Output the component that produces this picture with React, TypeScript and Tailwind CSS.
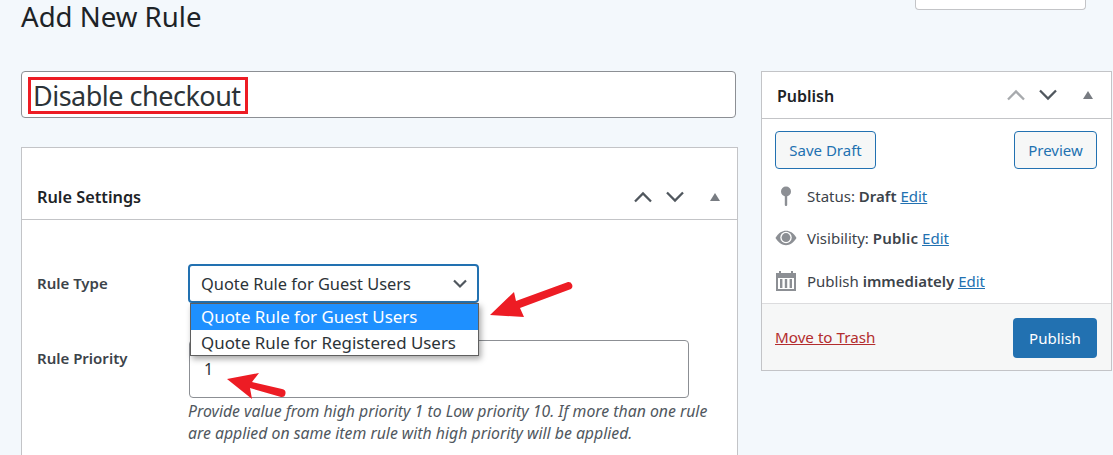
const font = "font-['Noto_Sans',sans-serif]";

const Chevrons = ({ upClass }: { upClass: string }) => (
  <div className="flex items-center">
    <svg width="20" height="12" viewBox="0 0 20 12" className={upClass} fill="none" stroke="currentColor" strokeWidth="2.3">
      <path d="M2 10.5 L10 2.5 L18 10.5" />
    </svg>
    <svg width="20" height="12" viewBox="0 0 20 12" className="ml-[12px] text-[#50575e]" fill="none" stroke="currentColor" strokeWidth="2.3">
      <path d="M2 1.5 L10 9.5 L18 1.5" />
    </svg>
    <svg width="12" height="8" viewBox="0 0 12 8" className="ml-[24px] text-[#787c82]" fill="currentColor">
      <path d="M6 0 L11 8 L1 8 Z" />
    </svg>
  </div>
);

const Edit = () => <a className="text-[#2271b1] underline">Edit</a>;

const MetaRow = ({ icon, children, className }: { icon: React.ReactNode; children: React.ReactNode; className: string }) => (
  <div className={`flex items-center text-[15px] leading-[20px] text-[#3c434a] ${className}`}>
    <span className="flex w-[32px] shrink-0 justify-center pr-[10px]">{icon}</span>
    <span className="whitespace-nowrap">{children}</span>
  </div>
);

export default function App() {
  return (
    <div className={`relative h-[455px] w-[1113px] overflow-hidden bg-[#f3f8fc] ${font}`}>
      <div className="flex items-start justify-between pl-[21px] pr-[27px]">
        <h1 className="text-[27.6px] leading-[33px] text-[#1d2327]">Add New Rule</h1>
        <div className="h-[10px] w-[171px] rounded-b-[4px] border border-t-0 border-[#c3c4c7] bg-white" />
      </div>

      <div className="mt-[38px] flex items-start pl-[21px]">
        {/* left column */}
        <div className="w-[717px]">
          <div className="flex h-[47px] w-[715px] items-center rounded-[4px] border border-[#8c8f94] bg-white pl-[11px] pt-[3px] text-[27px] tracking-[-0.5px] text-[#2c3338]">
            Disable checkout
          </div>

          <div className="mt-[29px] h-[400px] border border-[#c3c4c7] bg-white">
            <div className="flex h-[72px] items-end justify-between border-b border-[#c3c4c7] pb-[10px] pl-[15px] pr-[16px]">
              <h2 className="text-[16.3px] font-semibold leading-[24px] text-[#1d2327]">Rule Settings</h2>
              <div className="pb-[6px]">
                <Chevrons upClass="text-[#50575e]" />
              </div>
            </div>

            <div className="flex pl-[15px] pt-[44px]">
              <div className="w-[151px] shrink-0 text-[15px] font-semibold text-[#3c434a]">
                <div className="pt-[8px] leading-[22px]">Rule Type</div>
                <div className="pt-[53px] leading-[22px]">Rule Priority</div>
              </div>
              <div>
                <div className="flex h-[39px] w-[291px] items-center justify-between rounded-[4px] border-2 border-[#2271b1] pl-[11px] pr-[9px] pt-[1px] text-[16.4px] text-[#2c3338]">
                  <span>Quote Rule for Guest Users</span>
                  <svg width="16" height="10" viewBox="0 0 16 10" fill="none" stroke="#50575e" strokeWidth="2.2">
                    <path d="M2 1.5 L8 7.5 L14 1.5" />
                  </svg>
                </div>
                <div className="ml-[1px] mt-[37px] flex h-[58px] w-[500px] items-center rounded-[4px] border border-[#8c8f94] bg-white pl-[14px] text-[16px] text-[#2c3338]">
                  1
                </div>
                <p className="mt-[2px] w-[530px] text-[15.8px] italic leading-[22px] text-[#50575e]">
                  Provide value from high priority 1 to Low priority 10. If more than one rule are applied on same item rule with high priority will be applied.
                </p>
              </div>
            </div>
          </div>
        </div>

        {/* publish box */}
        <div className="ml-[23px] w-[351px] border border-[#c3c4c7] bg-white">
          <div className="flex h-[47px] items-center justify-between border-b border-[#c3c4c7] pl-[15px] pr-[16px]">
            <h2 className="pt-[1px] text-[16px] font-semibold text-[#1d2327]">Publish</h2>
            <div className="-ml-[1px] mr-[1px]">
              <Chevrons upClass="text-[#a7aaad]" />
            </div>
          </div>
          <div className="pl-[13px] pr-[13px] pt-[12px]">
            <div className="flex justify-between">
              <div className="flex h-[38px] w-[101px] items-center justify-center rounded-[4px] border border-[#2271b1] bg-[#f6f7f7] text-[15px] text-[#2271b1]">Save Draft</div>
              <div className="mr-[1px] flex h-[38px] w-[83px] items-center justify-center rounded-[4px] border border-[#2271b1] bg-[#f6f7f7] text-[15px] text-[#2271b1]">Preview</div>
            </div>
            <MetaRow
              className="mt-[17px]"
              icon={
                <svg width="12" height="20" viewBox="0 0 12 20" fill="#8c8f94">
                  <circle cx="6" cy="5.5" r="5" />
                  <rect x="4.8" y="8" width="2.4" height="12" rx="1" />
                </svg>
              }
            >
              Status: <b className="font-semibold">Draft</b> <Edit />
            </MetaRow>
            <MetaRow
              className="mt-[22px]"
              icon={
                <svg width="23" height="16" viewBox="0 0 23 16">
                  <path d="M0.5 8 C4 2.5 7.5 0.5 11.5 0.5 C15.5 0.5 19 2.5 22.5 8 C19 13.5 15.5 15.5 11.5 15.5 C7.5 15.5 4 13.5 0.5 8 Z" fill="#8c8f94" />
                  <circle cx="11.5" cy="7.5" r="6" fill="#fff" />
                  <circle cx="11.5" cy="7.5" r="4.6" fill="#8c8f94" />
                </svg>
              }
            >
              Visibility: <b className="font-semibold tracking-[0.2px]">Public</b> <Edit />
            </MetaRow>
            <MetaRow
              className="mt-[22px]"
              icon={
                <svg width="20" height="21" viewBox="0 0 20 21" fill="#8c8f94">
                  <path d="M0 3 H3 V1 H5 V3 H15 V1 H17 V3 H20 V21 H0 Z M2 8 V19 H18 V8 Z" />
                  <rect x="4" y="9" width="2.4" height="9" />
                  <rect x="8.8" y="9" width="2.4" height="9" />
                  <rect x="13.6" y="9" width="2.4" height="9" />
                </svg>
              }
            >
              Publish <b className="font-semibold">immediately</b> <Edit />
            </MetaRow>
          </div>
          <div className="mt-[12px] flex h-[67px] items-center justify-between border-t border-[#dcdcde] bg-[#f6f7f7] pl-[13px] pr-[14px] pt-[2px]">
            <a className="pb-[2px] text-[15.2px] text-[#b32d2e] underline">Move to Trash</a>
            <div className="flex h-[40px] w-[84px] items-center justify-center rounded-[4px] bg-[#2271b1] text-[15px] text-white">Publish</div>
          </div>
        </div>
      </div>

      {/* screenshot annotation over the title */}
      <div className="absolute left-[28px] top-[77px] h-[37px] w-[220px] border-[3px] border-[#ed1c24]" />

      {/* open native select list */}
      <div className="absolute left-[190px] top-[303px] w-[289px] border border-[#5f5f5f] bg-white text-[16.9px] text-[#2c3338] shadow-[2px_3px_6px_rgba(0,0,0,0.35)]">
        <div className="bg-[#1e90ff] pl-[10px] leading-[26px] text-white">Quote Rule for Guest Users</div>
        <div className="pl-[10px] leading-[25px]">Quote Rule for Registered Users</div>
      </div>

      {/* red arrows */}
      <svg className="absolute left-0 top-0" width="1113" height="455" fill="#ed1c24">
        <path d="M490 315 L514 292 L516 301 L568 282 A4 4 0 0 1 571 289 L520 308 L524 317 Z" />
        <path d="M227 379 L259 373 L252 382 L282 389 A3.5 3.5 0 0 1 281 397 L250 388 L252 399 Z" />
      </svg>
    </div>
  );
}
